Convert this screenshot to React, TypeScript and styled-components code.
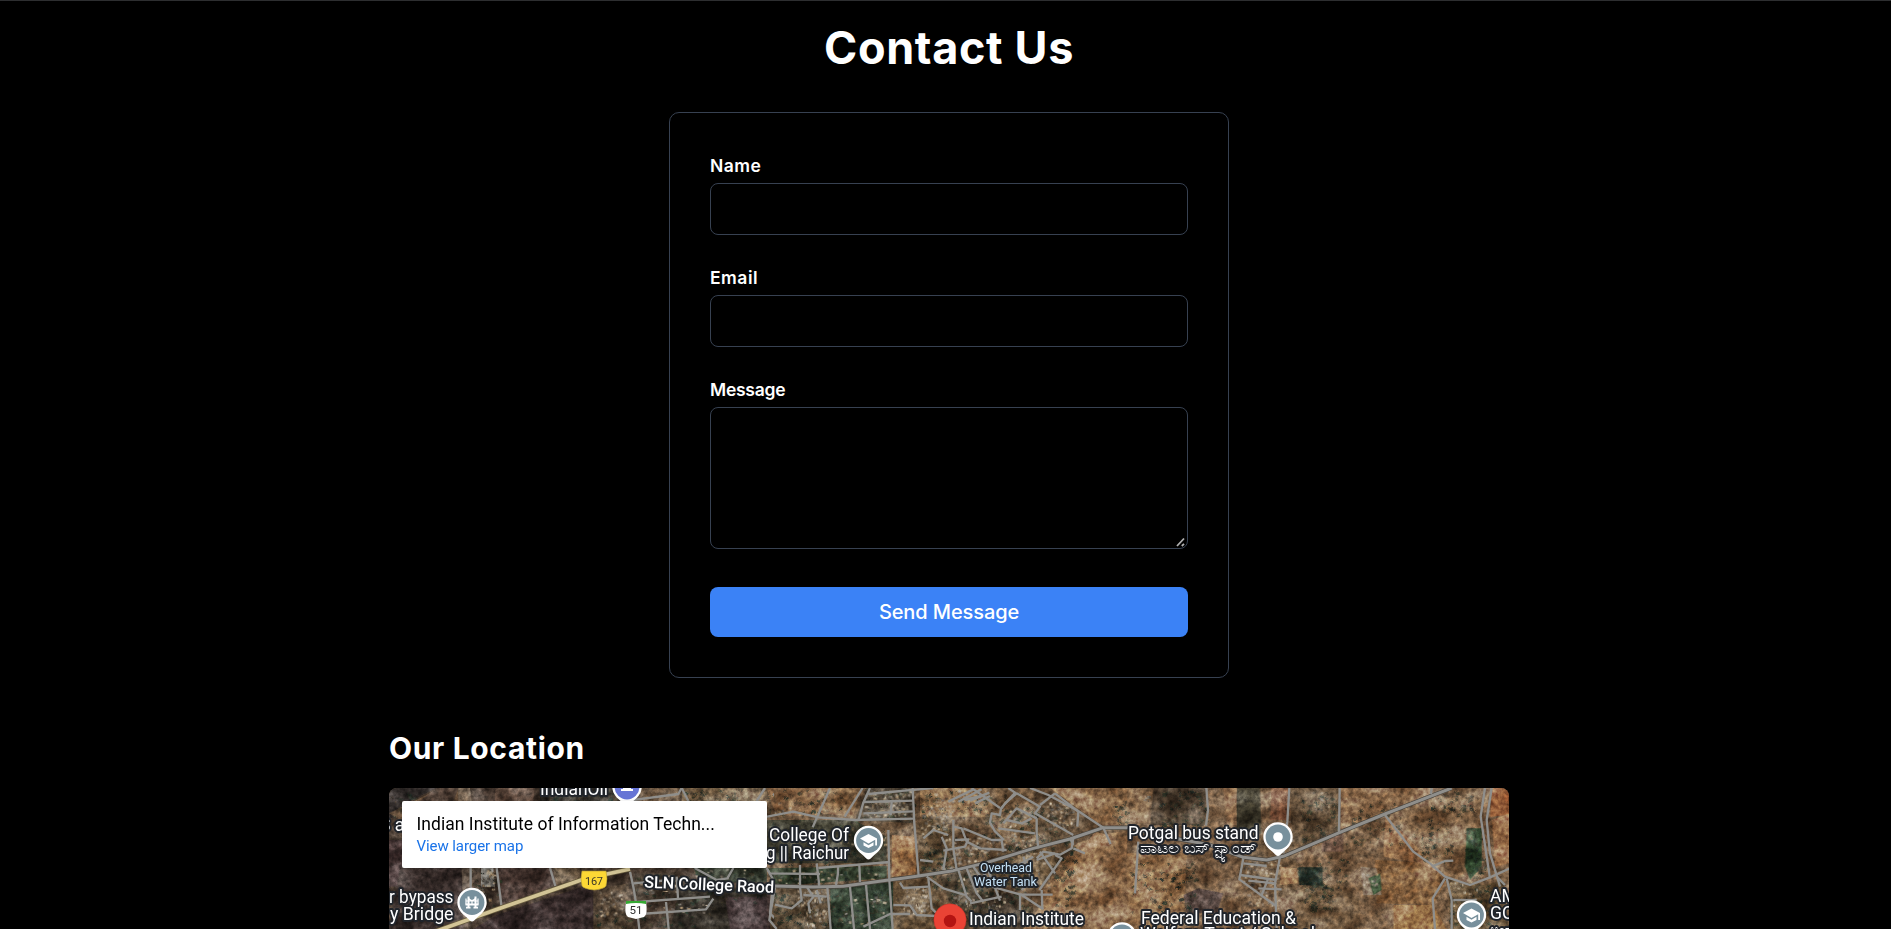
import React from "react";
import styled, { createGlobalStyle } from "styled-components";

const GlobalStyle = createGlobalStyle`
  * { box-sizing: border-box; }
  body { margin: 0; background: #000; overflow: hidden; }
`;

const Page = styled.main`
  height: 929px;
  overflow: hidden;
  padding-left: 7px;
  border-top: 1px solid #2d2e30;
  background: #000;
  color: #fff;
  font-family: Inter, "Open Sans", sans-serif;
  display: flex;
  flex-direction: column;
  align-items: center;
`;

const Title = styled.h1`
  margin: 17px 0 34px;
  font-size: 45px;
  line-height: 60px;
  font-weight: 700;
  letter-spacing: 0.65px;
  white-space: nowrap;
`;

const Form = styled.form`
  width: 560px;
  height: 566px;
  flex: none;
  padding: 40px;
  border: 1px solid #374151;
  border-radius: 10px;
`;

const Field = styled.div`
  position: relative;
  display: flex;
  flex-direction: column;
  margin-bottom: 30px;
`;

const Label = styled.label<{ $spacing: number }>`
  height: 30px;
  font-size: 17.5px;
  line-height: 26px;
  font-weight: 600;
  letter-spacing: ${(p) => p.$spacing}px;
`;

const Input = styled.input`
  width: 100%;
  height: 52px;
  padding: 12px;
  background: #000;
  color: #fff;
  border: 1px solid #374151;
  border-radius: 8px;
`;

const TextArea = styled.textarea`
  width: 100%;
  height: 142px;
  padding: 12px;
  background: #000;
  color: #fff;
  border: 1px solid #374151;
  border-radius: 8px;
  resize: none;
`;

const ResizeGrip = styled.svg`
  position: absolute;
  right: 2px;
  bottom: 2px;
  cursor: ns-resize;
`;

const SendButton = styled.button`
  width: 100%;
  height: 50px;
  margin-top: 8px;
  padding: 0;
  border: 0;
  border-radius: 8px;
  background: #3b82f6;
  color: #fff;
  font-family: inherit;
  font-size: 20px;
  font-weight: 500;
  letter-spacing: -0.1px;
`;

const Location = styled.section`
  width: 1120px;
  flex: none;
`;

const Subtitle = styled.h2`
  margin: 50px 0 20px;
  font-size: 30px;
  line-height: 40px;
  font-weight: 650;
  letter-spacing: 0.65px;
`;

const MapFrame = styled.div`
  position: relative;
  height: 600px;
  overflow: hidden;
  border-radius: 8px;
  background: #65513f;
  font-family: Roboto, sans-serif;
`;

const MapArt = styled.svg`
  display: block;
`;

const PlaceCard = styled.div`
  position: absolute;
  top: 13px;
  left: 13px;
  width: 365px;
  height: 67px;
  padding: 11px 14.5px;
  background: #fff;
  border-radius: 2px;
  box-shadow: 0 1px 4px -1px rgba(0, 0, 0, 0.3);
`;

const PlaceName = styled.div`
  color: #000;
  font-size: 17.5px;
  line-height: 24px;
  font-weight: 400;
  white-space: nowrap;
  letter-spacing: 0.04px;
`;

const PlaceLink = styled.a`
  display: block;
  color: #1a73e8;
  font-size: 15px;
  line-height: 20px;
  letter-spacing: -0.07px;
`;

type Shape = [string, string];
type Patch = [number, number, number, number, number];
interface Sector {
  transform: string;
  fields: Shape[];
  houses: Patch[];
  trees: Patch[];
  roads: string[];
}

const random = (seed: number) => () => {
  seed = (seed * 16807) % 2147483647;
  return seed / 2147483647;
};

// Each sector uses a grid of three units to a pixel.
const west: Sector = {
  transform: "translate(-9 -8) scale(.33333)",
  fields: [
    ["27,24 1200,24 1200,447 27,447", "#46392f"],
    ["27,24 170,24 90,63 27,120", "#332d2b"],
    ["27,100 150,40 235,24 235,64 60,120", "#6a5440"],
    ["170,24 235,24 220,63 120,63", "#54443a"],
    ["235,24 270,24 275,64 235,64", "#83715f"],
    ["280,24 345,24 345,64 280,64", "#4c3e35"],
    ["345,24 465,24 460,64 345,64", "#5e4a3e"],
    ["480,24 700,24 700,64 480,64", "#332f29"],
    ["780,24 905,24 900,64 780,64", "#64503c"],
    ["905,24 1200,24 1200,100 905,70", "#756047"],
    ["27,180 66,180 66,320 27,320", "#433332"],
    ["60,264 245,264 250,447 27,447", "#3b302d"],
    ["245,264 300,264 320,400 250,410", "#625448"],
    ["303,264 340,264 345,320 303,320", "#8c8983"],
    ["355,264 515,264 525,315 365,380", "#483832"],
    ["520,264 600,264 600,300 530,315", "#61503d"],
    ["280,447 350,405 640,310 655,380 640,447", "#392d2c"],
    ["640,330 745,310 765,447 640,447", "#554637"],
    ["760,280 890,280 890,360 770,360", "#4c4136"],
    ["900,330 1180,335 1180,447 870,447", "#353029"],
    ["1035,350 1165,350 1165,447 1050,447", "#453838"],
    ["940,264 1160,264 1160,305 960,310", "#2e3328"],
  ],
  houses: [[305, 270, 38, 55, 25], [655, 335, 85, 70, 50], [290, 320, 45, 50, 12], [780, 370, 210, 25, 22], [770, 280, 120, 70, 18], [940, 265, 200, 40, 14], [1150, 70, 50, 70, 15], [1170, 350, 30, 80, 12]],
  trees: [[910, 26, 250, 38, 40], [480, 24, 230, 38, 35], [750, 280, 250, 160, 80], [940, 264, 230, 100, 50], [250, 270, 110, 120, 35], [27, 30, 90, 80, 20], [640, 400, 110, 45, 18]],
  roads: ["750,275 760,320 770,380 778,447", "510,264 526,318", "350,264 365,384", "890,290 894,354", "770,366 990,350", "780,402 978,388 1000,356", "858,366 866,447", "944,264 1010,300 1042,295 1060,264", "1160,264 1180,300 1170,400 1200,430", "745,62 895,42 905,24", "1155,24 1130,63", "760,310 870,300", "905,24 925,63", "1180,40 1200,75", "272,264 272,330", "365,384 600,300"],
};

const centre: Sector = {
  transform: "translate(351 -8) scale(.33333)",
  fields: [
    ["65,24 1210,24 1210,447 20,447", "#6a543e"],
    ["75,24 265,24 235,110 110,105", "#88684a"],
    ["265,24 360,24 340,110 240,100", "#896b4c"],
    ["380,24 520,24 520,130 345,120", "#514638"],
    ["80,120 340,120 440,170 440,250 70,250", "#403e31"],
    ["455,165 525,170 530,250 525,285 455,290", "#9c7650"],
    ["530,130 620,100 640,240 540,280", "#645039"],
    ["540,24 760,24 750,110 540,110", "#927352"],
    ["720,24 880,24 890,180 780,190", "#775e44"],
    ["890,24 1060,115 1000,175 900,190", "#68543f"],
    ["930,24 1210,24 1210,140 1090,140", "#8d6d4d"],
    ["80,265 440,258 440,295 100,318", "#333e2d"],
    ["0,325 90,325 90,447 0,447", "#493b38"],
    ["90,325 270,325 280,447 90,447", "#5d4d3a"],
    ["270,320 460,305 460,447 275,447", "#344132"],
    ["460,305 600,295 600,447 460,447", "#624e37"],
    ["600,290 720,260 790,360 780,400 640,400", "#514434"],
    ["760,220 940,205 960,250 900,330 760,320", "#705b42"],
    ["1010,190 1110,160 1210,145 1210,447 930,447 900,340", "#8b6b4c"],
    ["1065,155 1110,165 1050,310 920,447 850,447", "#9b7a58"],
    ["700,340 840,340 850,447 700,447", "#4c4034"],
  ],
  houses: [[375, 30, 145, 85, 150], [540, 75, 95, 85, 75], [920, 65, 85, 80, 90], [800, 90, 70, 100, 40], [170, 330, 90, 110, 85], [490, 320, 75, 80, 70], [90, 270, 140, 50, 35], [600, 170, 120, 100, 90], [640, 290, 150, 105, 70], [700, 170, 180, 60, 60], [850, 240, 90, 90, 25], [280, 340, 150, 95, 25], [100, 55, 55, 60, 12], [240, 270, 190, 35, 16], [300, 135, 140, 60, 25], [560, 30, 180, 50, 20]],
  trees: [[80, 120, 350, 190, 160], [90, 335, 360, 105, 190], [370, 25, 150, 100, 60], [540, 30, 350, 240, 180], [630, 270, 240, 150, 140], [790, 80, 200, 130, 75], [1110, 60, 80, 75, 24], [570, 260, 160, 150, 60], [940, 200, 60, 230, 60], [540, 210, 70, 70, 35], [70, 25, 240, 90, 35]],
  roads: [
    "100,318 220,321 310,319 440,301 530,289 640,272 740,248 880,205 990,177 1090,143 1210,143",
    "870,24 925,45 1010,90 1090,143 1112,192",
    "65,24 42,80 75,105", "80,110 160,95 235,112 345,120 520,116", "270,24 218,142", "368,24 314,110", "390,24 370,68 355,122", "370,66 520,62", "385,42 580,24", "370,100 520,94", "455,65 452,105", "518,24 523,130 536,288",
    "445,150 448,300 458,447", "235,264 450,246", "80,266 90,280 240,282", "180,255 180,315", "230,250 238,318", "294,260 294,280 288,315", "358,254 360,306",
    "105,322 88,420 110,447", "180,320 185,360 155,385 105,374", "262,322 272,447", "330,320 342,447", "378,315 390,447", "190,345 260,350", "200,320 220,350 205,370 210,400", "230,330 242,370", "480,308 490,324 565,320", "565,295 575,385 600,410", "460,375 510,376 530,405 590,408", "370,440 450,402 510,402",
    "640,120 640,205 650,270", "640,140 665,145 680,185 720,205 800,210", "670,145 755,180 785,180 790,215", "605,170 620,205 610,270", "550,175 580,150 625,165", "540,240 580,245", "645,180 685,178 675,200 610,212",
    "625,65 700,28", "655,65 725,28", "675,60 735,45", "690,62 748,38", "705,70 750,48", "695,24 780,84", "805,24 825,38 783,85 780,105 755,100 750,128 765,154 792,180", "785,85 795,70 830,40 900,80 885,100 1000,165", "900,75 945,40", "945,40 1015,95 1012,140", "890,115 890,160 895,205", "775,145 885,160", "790,130 830,85 890,115", "800,120 845,130 875,115",
    "655,270 680,350 695,365", "680,265 710,340 730,365", "700,260 728,300", "740,260 760,310 780,362", "690,370 785,350", "720,260 755,320 845,345 910,388", "850,230 875,300 845,330", "900,215 945,280", "945,225 965,235 898,330", "1000,175 995,205 960,224 910,215 890,235", "890,240 945,220", "1000,205 1035,220", "905,330 907,385", "840,344 938,344", "560,290 610,325 675,345", "840,345 840,390", "790,280 880,230", "990,175 1000,195", "1195,185 1188,340"
  ],
};

const east: Sector = {
  transform: "translate(721 -8) scale(.33333)",
  fields: [
    ["-40,24 1200,24 1200,447 -40,447", "#795f46"],
    ["130,24 290,24 285,135 120,135", "#514233"],
    ["-10,24 130,24 110,130 -10,120", "#876a4d"],
    ["340,24 380,24 380,135 350,135", "#8d6c4e"],
    ["380,24 450,24 455,190 380,150", "#413c2e"],
    ["484,24 533,24 533,120 480,120", "#805942"],
    ["540,24 690,24 690,150 580,205 545,180", "#66523d"],
    ["692,24 960,24 960,50 820,100 692,150", "#88684a"],
    ["380,150 560,180 560,370 390,300", "#6d563e"],
    ["565,320 700,315 750,360 750,447 560,447", "#735b42"],
    ["510,260 562,265 565,310 510,315", "#a07d59"],
    ["635,165 700,160 700,215 635,215", "#745949"],
    ["795,240 990,250 1010,300 970,375 800,370", "#84613f"],
    ["850,375 970,375 1010,447 850,447", "#9b754b"],
    ["825,105 1010,290 930,250 820,230", "#977250"],
    ["835,100 1000,50 1120,60 1100,290 1000,290", "#82664a"],
    ["1145,24 1198,24 1198,105 1140,110", "#98613c"],
    ["1145,120 1198,100 1198,250 1155,260", "#9d7450"],
    ["1015,300 1120,315 1180,300 1198,447 1020,447", "#665239"],
    ["752,260 800,265 815,345 760,345", "#8b7965"],
    ["775,295 810,280 815,330 790,345", "#3d5136"],
    ["-40,220 230,220 220,447 -40,447", "#906e4c"],
    ["265,325 340,340 320,400 230,400 220,345", "#50403a"],
    ["565,262 637,262 637,318 568,315", "#26312a"],
    ["1070,145 1115,145 1115,260 1080,300 1065,260", "#33472f"],
  ],
  houses: [[400, 240, 105, 135, 130], [475, 120, 70, 100, 18], [100, 40, 15, 30, 8], [600, 30, 55, 60, 12], [1010, 300, 90, 130, 35], [755, 265, 45, 60, 15]],
  trees: [[150, 30, 140, 110, 80], [570, 35, 110, 150, 70], [700, 60, 220, 130, 45], [560, 250, 85, 70, 55], [580, 320, 90, 65, 55], [930, 110, 95, 140, 50], [960, 30, 130, 75, 45], [1065, 145, 55, 150, 45], [1010, 310, 150, 130, 60], [60, 245, 200, 160, 80], [630, 230, 80, 140, 25], [-30, 60, 80, 80, 25]],
  roads: [
    "-20,142 60,142 130,162 300,195 400,232 470,240 520,229 690,157 825,102 1025,24",
    "289,24 294,90 288,137", "538,24 532,125 520,220", "689,24 687,157", "965,24 963,42",
    "825,105 910,215 960,250 1005,290 1080,315 1140,292 1200,265", "1125,24 1112,110 1140,295", "1145,24 1130,120 1140,220 1170,320", "1010,295 1025,360 1025,447", "1005,295 968,355 975,447", "965,260 1005,243 1030,242",
    "85,185 75,340", "400,235 388,298 498,378", "400,250 470,258", "390,285 500,300", "415,302 495,310", "445,325 515,328", "475,295 455,345", "510,230 495,310 500,447", "1030,360 1100,360", "1160,290 1185,315"
  ],
};

function scatter(patches: Patch[], seed: number, colors: string[], maxSize: number) {
  const next = random(seed);
  return patches.flatMap(([x, y, w, h, count], p) =>
    Array.from({ length: count }, (_, i) => {
      const cx = x + next() * w;
      const cy = y + next() * h;
      const a = 2.5 + next() * maxSize;
      const b = 2.5 + next() * maxSize * 0.7;
      return (
        <rect
          key={`${p}-${i}`}
          x={cx}
          y={cy}
          width={a}
          height={b}
          rx={maxSize > 10 ? 4 : 0.5}
          fill={colors[Math.floor(next() * colors.length)]}
          opacity={0.55 + next() * 0.4}
          transform={`rotate(${-12 + next() * 24} ${cx} ${cy})`}
        />
      );
    })
  );
}

const SectorArt = ({ sector, seed }: { sector: Sector; seed: number }) => (
  <g transform={sector.transform}>
    {sector.fields.map(([points, fill], i) => <polygon key={i} points={points} fill={fill} />)}
    <g filter="url(#rough)">
      {scatter(sector.trees, seed, ["#27302a", "#303a2c", "#3b3a2c", "#243129", "#473e2f"], 13)}
    </g>
    {scatter(sector.houses, seed + 71, ["#b3a38b", "#8e8477", "#d0c0a5", "#9e8565", "#77736d", "#4c443b"], 9)}
  </g>
);

const SectorRoads = ({ sector, major }: { sector: Sector; major: boolean }) => (
  <g transform={sector.transform} fill="none" strokeLinejoin="round">
    {major && <polyline points={sector.roads[0]} stroke="#4a453e" strokeWidth="13" />}
    {sector.roads.map((points, i) => (
      <polyline key={i} points={points} stroke="#8f8e8b" strokeWidth={i === 0 && major ? 9 : 7} />
    ))}
  </g>
);

const Pin = ({ x, y, color = "#78909c", children }: { x: number; y: number; color?: string; children?: React.ReactNode }) => (
  <g transform={`translate(${x} ${y})`}>
    <path d="M-14.7 0A14.7 14.7 0 1 1 14.7 0C14.7 7 9.5 11.5 5.8 14.5L2.2 18Q0 20-2.2 18L-5.8 14.5C-9.5 11.5-14.7 7-14.7 0Z" fill="#fff" />
    <circle r="12.4" fill={color} />
    {children}
  </g>
);

const Cap = () => (
  <g fill="#fff">
    <path d="M-8.5-2 0-6.5 8.5-2V5H6.7V-.8L0 3Z" />
    <path d="M-5 1.8 0 4.7 5 1.8V4.9L0 7.5-5 4.9Z" />
  </g>
);

interface MapTextProps {
  x: number;
  y: number;
  width?: number;
  size?: number;
  weight?: number;
  color?: string;
  children: string;
}

const MapText = ({ x, y, width, size = 17.5, weight = 400, color = "#fff", children }: MapTextProps) => (
  <text
    x={x}
    y={y}
    textLength={width}
    lengthAdjust="spacingAndGlyphs"
    fontSize={size}
    fontWeight={weight}
    fill={color}
    stroke="#20242a"
    strokeWidth="3.8"
    strokeLinejoin="round"
    paintOrder="stroke"
  >
    {children}
  </text>
);

const SatelliteMap = () => (
  <MapArt width="1120" height="141" viewBox="0 0 1120 141">
    <defs>
      <filter id="rough" x="-5%" y="-5%" width="110%" height="110%">
        <feTurbulence type="fractalNoise" baseFrequency=".25" numOctaves="2" seed="4" />
        <feDisplacementMap in="SourceGraphic" scale="12" xChannelSelector="R" yChannelSelector="G" />
      </filter>
      <filter id="grain" x="0" y="0" width="100%" height="100%" colorInterpolationFilters="sRGB">
        <feTurbulence type="fractalNoise" baseFrequency=".2" numOctaves="4" seed="9" />
        <feColorMatrix values="1.5 0 0 0 -.25  1.5 0 0 0 -.25  1.5 0 0 0 -.25  0 0 0 0 1" />
      </filter>
      <filter id="mottle" x="0" y="0" width="100%" height="100%" colorInterpolationFilters="sRGB">
        <feTurbulence type="fractalNoise" baseFrequency=".035 .05" numOctaves="4" seed="21" />
        <feColorMatrix values="2 0 0 0 -.5  2 0 0 0 -.5  2 0 0 0 -.5  0 0 0 0 1" />
      </filter>
      <clipPath id="west"><rect width="385" height="141" /></clipPath>
      <clipPath id="centre"><rect x="378" width="362" height="141" /></clipPath>
      <clipPath id="east"><rect x="738" width="382" height="141" /></clipPath>
    </defs>
    <g style={{ isolation: "isolate" }}>
      <g clipPath="url(#west)"><SectorArt sector={west} seed={17} /></g>
      <g clipPath="url(#centre)"><SectorArt sector={centre} seed={93} /></g>
      <g clipPath="url(#east)"><SectorArt sector={east} seed={231} /></g>
      <rect width="1120" height="141" filter="url(#mottle)" opacity=".6" style={{ mixBlendMode: "soft-light" }} />
      <rect width="1120" height="141" filter="url(#grain)" opacity=".4" style={{ mixBlendMode: "overlay" }} />
    </g>
    <g clipPath="url(#west)"><SectorRoads sector={west} major={false} /></g>
    <g clipPath="url(#centre)"><SectorRoads sector={centre} major /></g>
    <g clipPath="url(#east)"><SectorRoads sector={east} major /></g>
    <polyline points="45,144 106,122 195,91 241,81" fill="none" stroke="#655a3d" strokeWidth="5.2" />
    <polyline points="45,144 106,122 195,91 241,81" fill="none" stroke="#d2c496" strokeWidth="3.7" />

    <MapText x={151} y={7} width={68}>IndianOil</MapText>
    <Pin x={238} y={-1} color="#6674d5"><path d="M-6 4H6V2H4V-6H-4V2H-6Z" fill="#fff" /></Pin>
    <MapText x={-9} y={42.5}>S a</MapText>
    <MapText x={0} y={115} width={64.5}>r bypass</MapText>
    <MapText x={1} y={131.5} width={63.5}>y Bridge</MapText>
    <Pin x={83} y={114.5}>
      <g fill="none" stroke="#fff">
        <path d="M-3.5-6V5M3.5-6V5" strokeWidth="2" />
        <path d="M-6.5 2H6.5M-6 5.2H-1.5M1.5 5.2H6" strokeWidth="1.8" />
        <path d="M-6-4V2M6-4V2M0-1.5V2M-6-1.5H6M-3.5-4Q0 0 3.5-4" strokeWidth="1.2" />
      </g>
    </Pin>
    <path d="M193 83H217Q219 91 217 98Q215 101 205 102Q195 101 193 98Q191 91 193 83Z" fill="#fdd835" stroke="#b29b35" strokeWidth=".6" />
    <text x="205" y="96.5" fontSize="11" textAnchor="middle" fill="#3c3828" textLength="18">167</text>
    <path d="M237 113H257Q259 127 255 129L247 131L239 129Q235 127 237 113Z" fill="#fff" />
    <path d="M237 113H257V116Q247 114 237 116Z" fill="#35a833" />
    <text x="247" y="126" fontSize="11.5" textAnchor="middle" fill="#303030">51</text>
    <g transform="rotate(2.4 255 99.5)"><MapText x={255} y={99.5} width={130} size={16.5} weight={500}>SLN College Raod</MapText></g>
    <MapText x={380} y={53} width={80}>College Of</MapText>
    <MapText x={377} y={70.5} width={83}>g || Raichur</MapText>
    <Pin x={479.5} y={52.5}><Cap /></Pin>
    <MapText x={591} y={84} width={52} size={12.5} color="#c5e1f5">Overhead</MapText>
    <MapText x={585} y={97.5} width={63} size={12.5} color="#c5e1f5">Water Tank</MapText>
    <circle cx="561" cy="132" r="16.2" fill="#ea4335" stroke="#c33228" strokeWidth=".5" />
    <circle cx="561" cy="133" r="6.2" fill="#b31412" />
    <MapText x={580} y={137} width={115}>Indian Institute</MapText>
    <MapText x={739} y={51} width={130.5}>Potgal bus stand</MapText>
    <MapText x={751} y={65} width={117} size={14}>ಪಾಟಲ ಬಸ್ ಸ್ಟ್ಯಾಂಡ್</MapText>
    <Pin x={889} y={49}><circle r="4.8" fill="#fff" /></Pin>
    <MapText x={752} y={135.5} width={155}>Federal Education &amp;</MapText>
    <MapText x={751} y={152} width={175}>Welfare Trust / School</MapText>
    <Pin x={733} y={149} />
    <MapText x={1101} y={113.5}>AMG</MapText>
    <MapText x={1101} y={131}>GOVT</MapText>
    <MapText x={1101} y={146} size={13}>ಅಂಗ</MapText>
    <Pin x={1082.5} y={127}><Cap /></Pin>
  </MapArt>
);

export default function App() {
  return (
    <>
      <GlobalStyle />
      <Page>
        <Title>Contact Us</Title>
        <Form>
          <Field>
            <Label htmlFor="name" $spacing={0.45}>Name</Label>
            <Input id="name" />
          </Field>
          <Field>
            <Label htmlFor="email" $spacing={0.5}>Email</Label>
            <Input id="email" />
          </Field>
          <Field>
            <Label htmlFor="message" $spacing={-0.25}>Message</Label>
            <TextArea id="message" />
            <ResizeGrip width="10" height="10" viewBox="0 0 10 10" stroke="#b0b0b0" strokeWidth="1.8">
              <path d="M1 9 8 1.5M5.8 9 8 6.8" fill="none" />
            </ResizeGrip>
          </Field>
          <SendButton type="button">Send Message</SendButton>
        </Form>
        <Location>
          <Subtitle>Our Location</Subtitle>
          <MapFrame>
            <SatelliteMap />
            <PlaceCard>
              <PlaceName>Indian Institute of Information Techn...</PlaceName>
              <PlaceLink>View larger map</PlaceLink>
            </PlaceCard>
          </MapFrame>
        </Location>
      </Page>
    </>
  );
}
